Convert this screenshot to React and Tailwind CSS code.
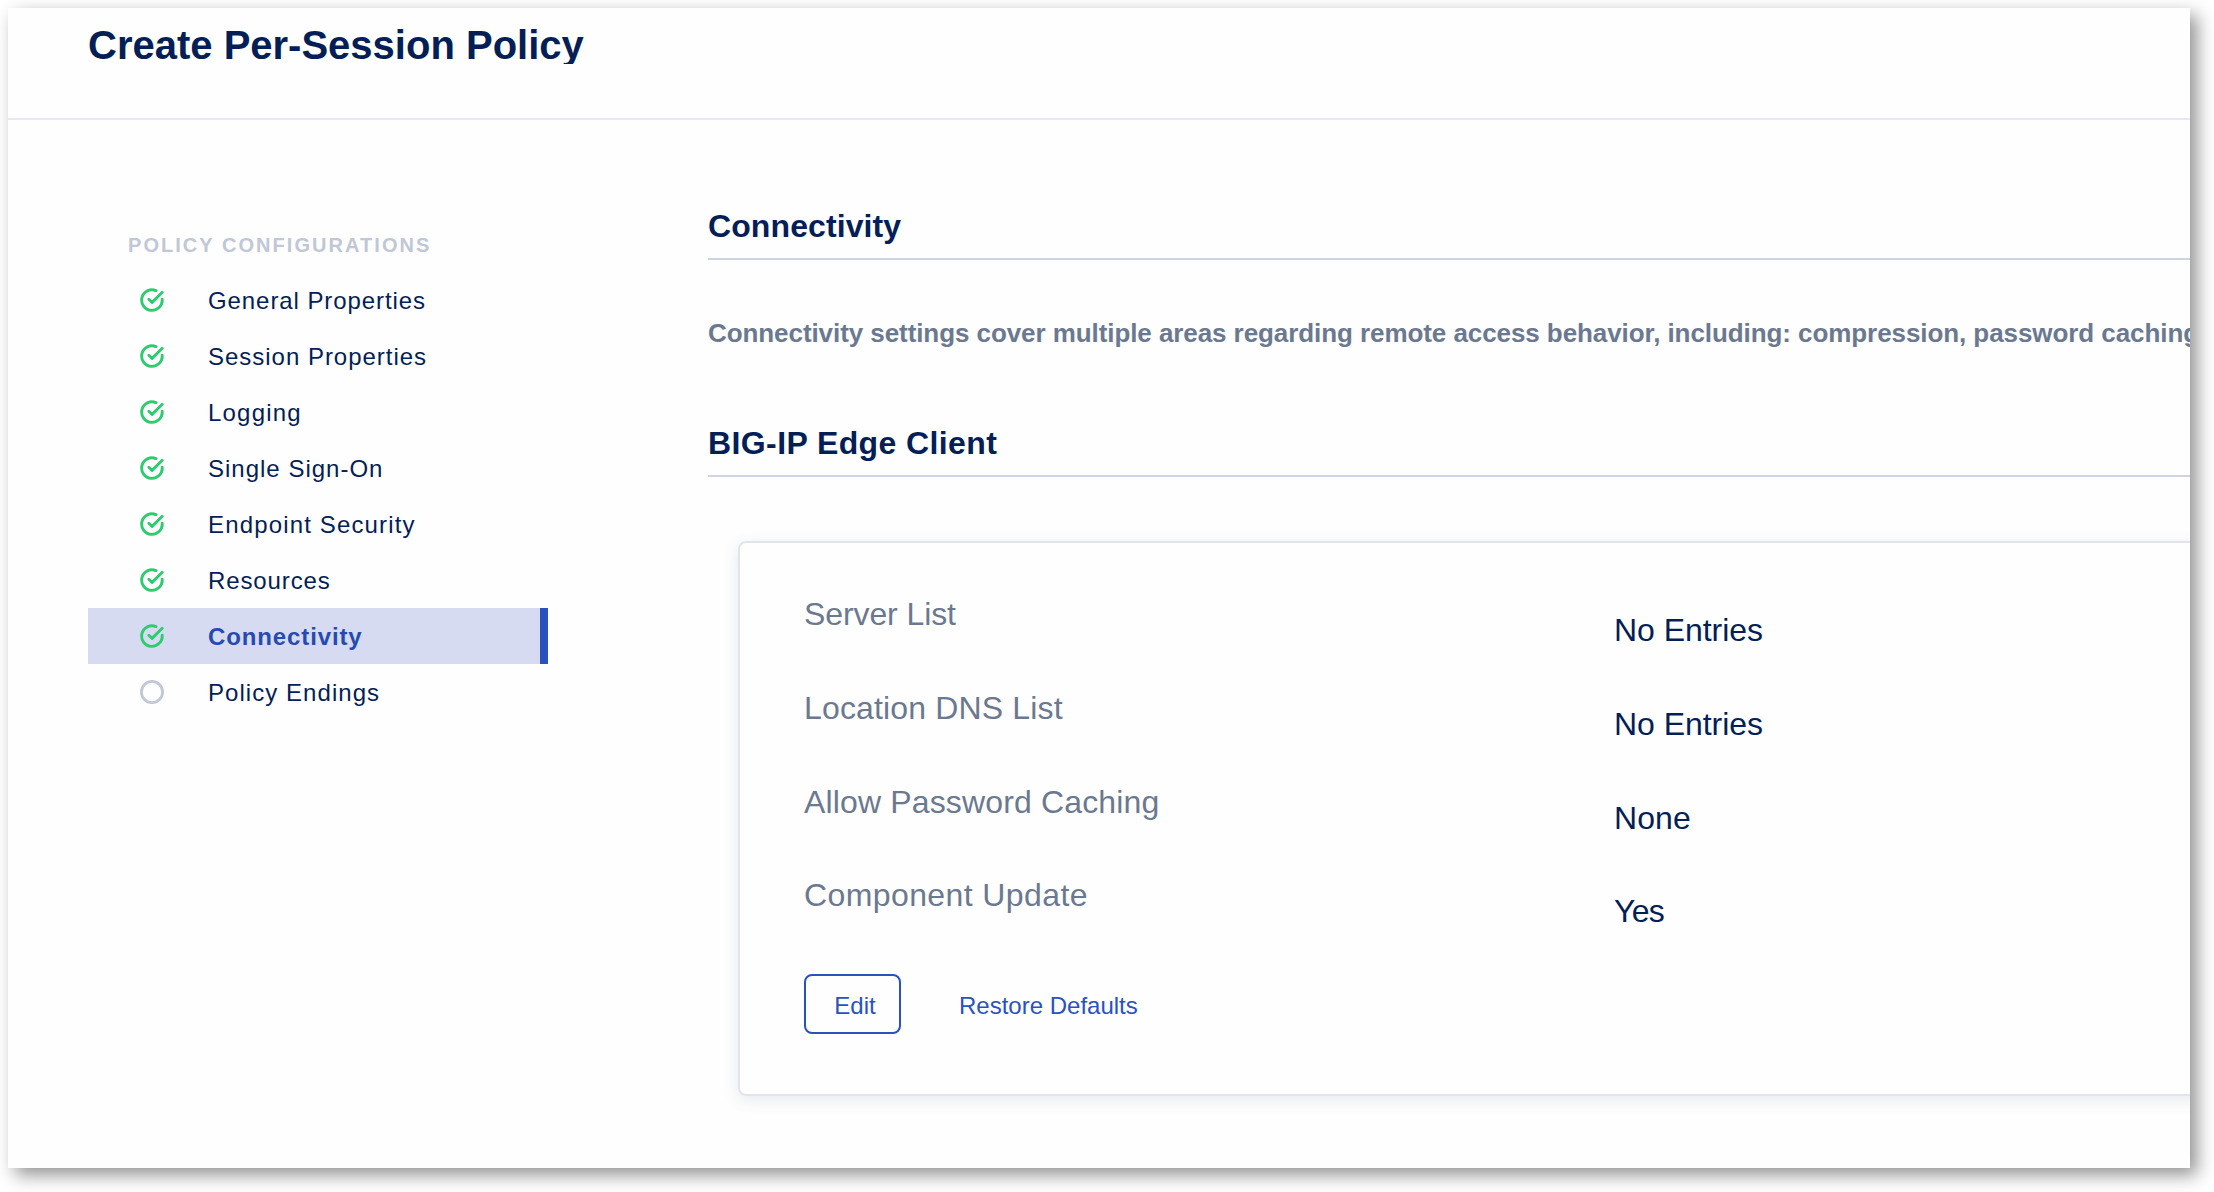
import React from "react";

const steps = [
  { label: "General Properties", done: true, tracking: "tracking-[0.92px]" },
  { label: "Session Properties", done: true, tracking: "tracking-[0.98px]" },
  { label: "Logging", done: true, tracking: "tracking-[1.2px]" },
  { label: "Single Sign-On", done: true, tracking: "tracking-[1px]" },
  { label: "Endpoint Security", done: true, tracking: "tracking-[1.15px]" },
  { label: "Resources", done: true, tracking: "tracking-[0.88px]" },
  { label: "Connectivity", done: true, active: true, tracking: "tracking-[0.88px]" },
  { label: "Policy Endings", done: false, tracking: "tracking-[1.05px]" },
];

const settings = [
  { label: "Server List", tracking: "tracking-[-0.1px]", value: "No Entries", valueTracking: "tracking-[-0.05px]" },
  { label: "Location DNS List", tracking: "tracking-[0.15px]", value: "No Entries", valueTracking: "tracking-[-0.05px]" },
  { label: "Allow Password Caching", tracking: "tracking-[0.15px]", value: "None", valueTracking: "tracking-[0.1px]" },
  { label: "Component Update", tracking: "tracking-[0.4px]", value: "Yes", valueTracking: "tracking-[-0.7px]" },
];

function StepIcon({ done }) {
  if (!done) {
    return (
      <svg className="size-6 shrink-0" viewBox="0 0 24 24" fill="none" stroke="#c0c7d6" strokeWidth="2.8">
        <circle cx="12" cy="12" r="10.6" />
      </svg>
    );
  }
  return (
    <svg className="size-6 shrink-0" viewBox="0 0 24 24" fill="none" stroke="#2ecc71" strokeWidth="2.9" strokeLinecap="round" strokeLinejoin="round">
      <path d="M16 2.6A10.3 10.3 0 1 0 22.2 11.2" />
      <path d="M8.9 11.2L12.1 14.4L22.2 4.3" />
    </svg>
  );
}

function SectionHeading({ tracking, children }) {
  return (
    <h2 className={"h-[52px] border-b-2 border-[#cfd4e3] text-[32px] leading-[36px] font-bold text-[#041e56] " + tracking}>
      {children}
    </h2>
  );
}

export default function App() {
  return (
    <div className="h-[1192px] w-[2214px] overflow-hidden bg-white pt-2 pl-2 font-['Liberation_Sans',Arial,sans-serif]">
      <div className="h-[1160px] w-[2182px] shadow-[7px_7px_17px_rgba(0,0,0,0.43)]">
        <div className="h-full w-full overflow-hidden bg-[#fefefe]">
          <header className="h-28 border-b-2 border-[#e6e9f5] pt-[14px] pl-20">
            <h1 className="h-[42px] overflow-hidden text-[40px] leading-[46px] font-bold whitespace-nowrap text-[#041e56]">
              Create Per-Session Policy
            </h1>
          </header>

          <div className="flex">
            <aside className="w-[620px] shrink-0 pt-[114px] pl-20">
              <div className="h-[38px] pl-10 text-xl leading-[22px] font-bold tracking-[2.05px] text-[#c0c7d6]">
                POLICY CONFIGURATIONS
              </div>
              <ul className="w-[460px]">
                {steps.map((s) => (
                  <li
                    key={s.label}
                    className={
                      "flex h-14 items-center gap-11 pl-[52px] text-2xl " +
                      (s.active
                        ? "border-r-8 border-[#2a52be] bg-[#d7dbf1] font-bold text-[#264bb0]"
                        : "text-[#041e56]")
                    }
                  >
                    <StepIcon done={s.done} />
                    <span className={"pt-px leading-7 " + s.tracking}>{s.label}</span>
                  </li>
                ))}
              </ul>
            </aside>

            <main className="w-[1700px] shrink-0 pt-[88px] pl-20">
              <SectionHeading tracking="tracking-[0.1px]">Connectivity</SectionHeading>
              <p className="h-[165px] pt-[58px] text-[26px] leading-[30px] font-bold tracking-[-0.075px] whitespace-nowrap text-[#6b7990]">
                Connectivity settings cover multiple areas regarding remote access behavior, including: compression, password caching
              </p>
              <SectionHeading tracking="tracking-[0.4px]">BIG-IP Edge Client</SectionHeading>

              <section className="mt-16 ml-[30px] h-[555px] w-[1500px] rounded-lg border-2 border-[#e2e4eb] pt-[53px] pl-16 shadow-[0_4px_16px_rgba(60,80,130,0.12)]">
                <dl>
                  {settings.map((s) => (
                    <div key={s.label} className="flex h-[93.8px] text-[32px] leading-9">
                      <dt className={"w-[810px] text-[#6b7990] " + s.tracking}>{s.label}</dt>
                      <dd className={"pt-4 text-[#041e56] " + s.valueTracking}>{s.value}</dd>
                    </div>
                  ))}
                </dl>
                <div className="mt-[3px] flex items-center text-2xl text-[#2a52be]">
                  <button className="h-[60px] w-[97px] rounded-lg border-2 border-[#2a52be] pt-[3px] pl-[5px]">Edit</button>
                  <button className="ml-[58px] pt-[3px]">Restore Defaults</button>
                </div>
              </section>
            </main>
          </div>
        </div>
      </div>
    </div>
  );
}
